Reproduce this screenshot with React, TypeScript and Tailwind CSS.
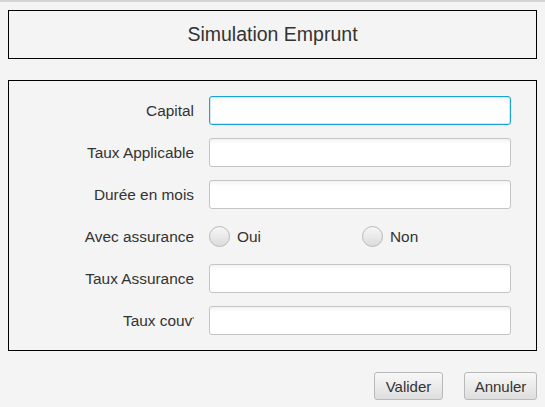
import React from 'react';

const font = { fontFamily: '"Liberation Sans", Arial, sans-serif' };

const Field = ({ focused }: { focused?: boolean }) => (
  <div
    className={`h-[29px] w-[302px] rounded-[3px] border bg-gradient-to-b from-[#f4f4f4] to-white to-[20%] ${
      focused ? 'border-[#1aa3d8] shadow-[inset_0_0_0_1px_#cde9f5]' : 'border-[#c4c4c4]'
    }`}
  />
);

const Radio = ({ label }: { label: string }) => (
  <div className="flex items-center gap-[7px]">
    <div className="h-[21px] w-[21px] rounded-full border border-[#b8b8b8] bg-gradient-to-b from-[#f7f7f7] to-[#dcdcdc]" />
    <span>{label}</span>
  </div>
);

const Label = ({ children }: { children: React.ReactNode }) => (
  <div className="whitespace-nowrap text-right">{children}</div>
);

const Button = ({ children, w }: { children: React.ReactNode; w: string }) => (
  <button
    className={`${w} h-[28px] rounded-[3px] border border-[#b9b9b9] bg-gradient-to-b from-[#f8f8f8] to-[#dedede] text-[15px] leading-none text-[#333]`}
  >
    {children}
  </button>
);

export default function App() {
  return (
    <div className="h-[407px] w-[545px] border-t-2 border-[#d4d4d4] bg-[#f4f4f4] text-[15.4px] leading-none text-[#333]" style={font}>
      <div className="px-[8px] pt-[8px]">
        <div className="flex h-[49px] items-center justify-center border border-black text-[19.5px] text-[#333]">
          Simulation Emprunt
        </div>
      </div>
      <div className="px-[8px] pt-[21px]">
        <div className="grid grid-cols-[185px_302px] items-center gap-x-[15px] gap-y-[13px] border border-black pb-[15px] pt-[15px]">
          <Label>Capital</Label>
          <Field focused />
          <Label>Taux Applicable</Label>
          <Field />
          <Label>Durée en mois</Label>
          <Field />
          <Label>Avec assurance</Label>
          <div className="grid h-[29px] grid-cols-[153px_1fr] items-center">
            <Radio label="Oui" />
            <Radio label="Non" />
          </div>
          <Label>Taux Assurance</Label>
          <Field />
          <Label>
            Taux couv<span className="relative -top-[3px] text-[9px]">'</span>
          </Label>
          <Field />
        </div>
      </div>
      <div className="flex justify-end gap-[21px] pr-[8px] pt-[21px]">
        <Button w="w-[69px]">Valider</Button>
        <Button w="w-[73px]">Annuler</Button>
      </div>
    </div>
  );
}
